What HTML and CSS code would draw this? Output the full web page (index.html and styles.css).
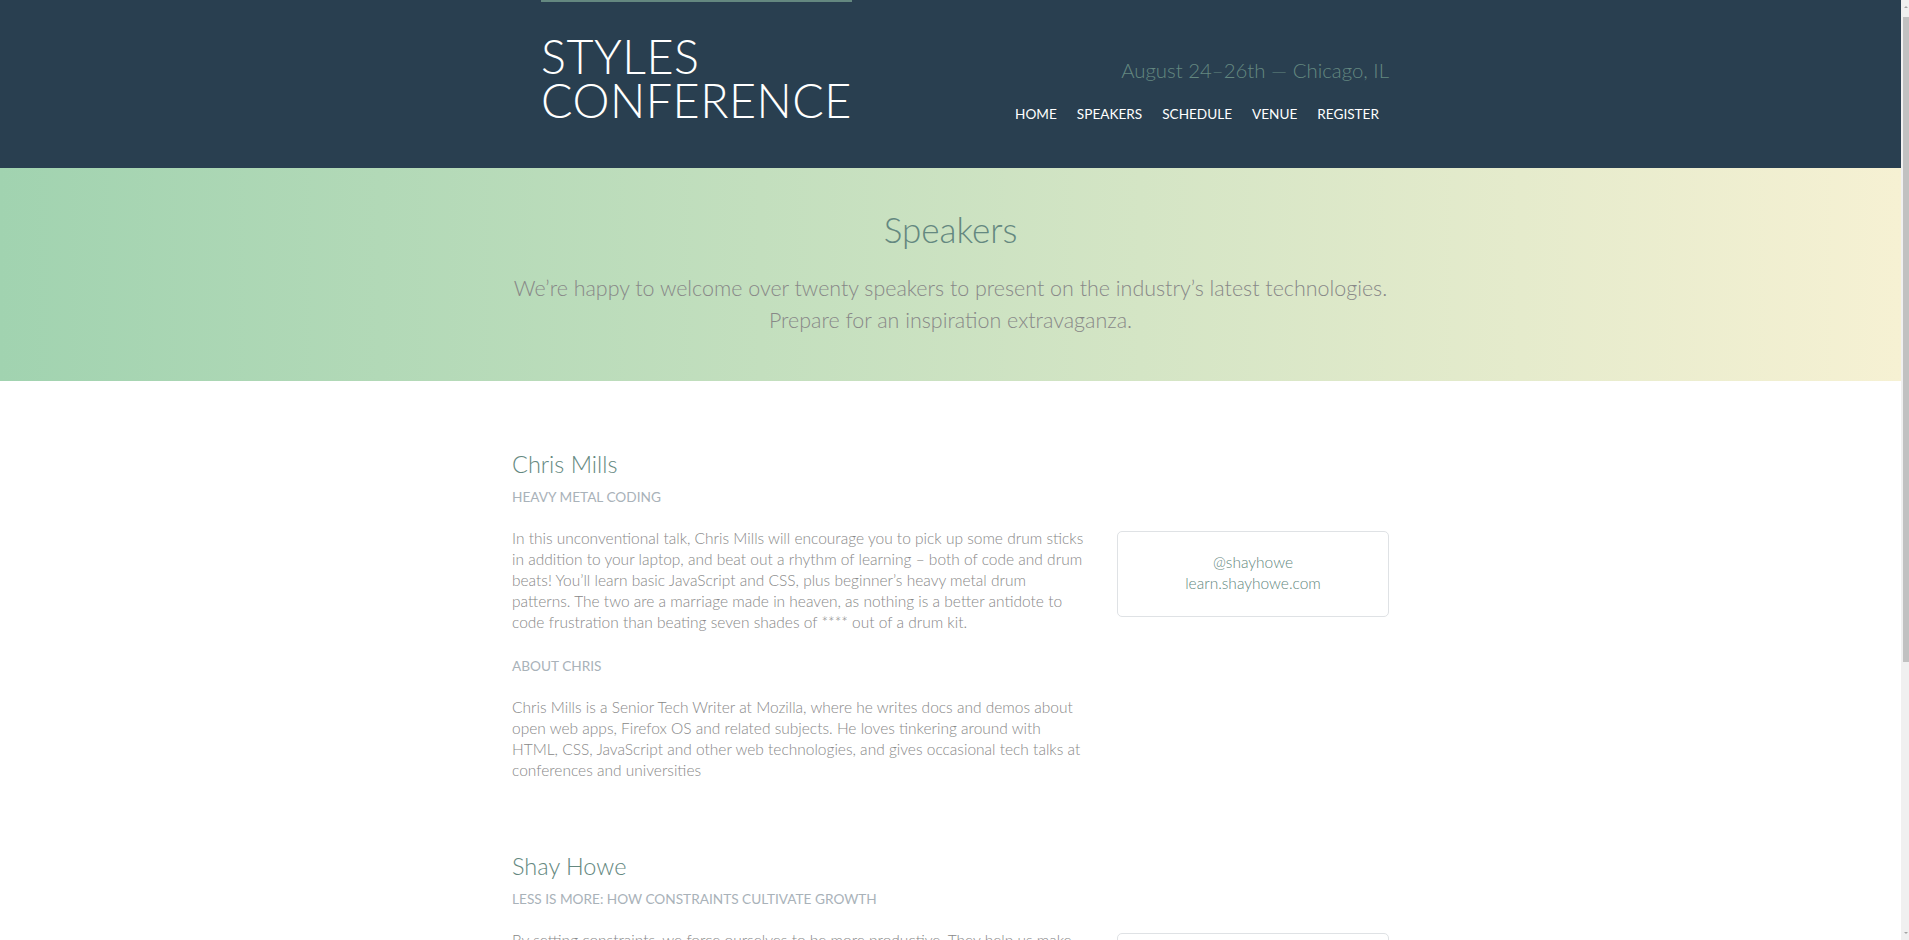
FILE: index.html
```html
<!DOCTYPE html>
<html lang="en">
<head>
<meta charset="utf-8">
<title>Speakers — Styles Conference</title>
<link rel="stylesheet" href="styles.css">
</head>
<body>
<header class="site-header">
  <div class="container header-inner">
    <h1 class="logo"><a href="#">Styles<br>Conference</a></h1>
    <div class="header-right">
      <h3 class="tagline">August 24–26th — Chicago, IL</h3>
      <nav class="nav">
        <a href="#">Home</a>
        <a href="#">Speakers</a>
        <a href="#">Schedule</a>
        <a href="#">Venue</a>
        <a href="#">Register</a>
      </nav>
    </div>
  </div>
</header>

<section class="lead">
  <div class="container">
    <h1 class="lead-title">Speakers</h1>
    <p class="lead-text">We’re happy to welcome over twenty speakers to present on the industry’s latest technologies. Prepare for an inspiration extravaganza.</p>
  </div>
</section>

<main class="container speakers">
  <section class="speaker">
    <div class="speaker-main">
      <h2 class="speaker-name">Chris Mills</h2>
      <h5 class="label">Heavy Metal Coding</h5>
      <p>In this unconventional talk, Chris Mills will encourage you to pick up some drum sticks in addition to your laptop, and beat out a rhythm of learning – both of code and drum beats! You’ll learn basic JavaScript and CSS, plus beginner’s heavy metal drum patterns. The two are a marriage made in heaven, as nothing is a better antidote to code frustration than beating seven shades of **** out of a drum kit.</p>
      <h5 class="label">About Chris</h5>
      <p>Chris Mills is a Senior Tech Writer at Mozilla, where he writes docs and demos about open web apps, Firefox OS and related subjects. He loves tinkering around with HTML, CSS, JavaScript and other web technologies, and gives occasional tech talks at conferences and universities</p>
    </div>
    <aside class="speaker-aside">
      <div class="speaker-info">
        <a href="#">@shayhowe</a>
        <a href="#">learn.shayhowe.com</a>
      </div>
    </aside>
  </section>

  <section class="speaker">
    <div class="speaker-main">
      <h2 class="speaker-name">Shay Howe</h2>
      <h5 class="label">Less Is More: How Constraints Cultivate Growth</h5>
      <p>By setting constraints, we force ourselves to be more productive. They help us make decisions, keep us focused, and push us to find creative solutions. Learn how embracing limits on time, tools and scope leads to better work and faster growth.</p>
      <h5 class="label">About Shay</h5>
      <p>Shay Howe is a designer and front-end developer who loves building products and teaching others to do the same.</p>
    </div>
    <aside class="speaker-aside">
      <div class="speaker-info">
        <a href="#">@shayhowe</a>
        <a href="#">learn.shayhowe.com</a>
      </div>
    </aside>
  </section>
</main>

<footer class="site-footer">
  <div class="container footer-inner">
    <small>&copy; Styles Conference</small>
  </div>
</footer>

<div class="scrollbar" aria-hidden="true">
  <span class="scroll-arrow scroll-arrow-up"></span>
  <span class="scroll-thumb"></span>
  <span class="scroll-arrow scroll-arrow-down"></span>
</div>
</body>
</html>
```

FILE: styles.css
```css
body {
  margin: 0 8px 0 0;
  color: #888;
  font: 300 15.5px/21px "Lato", "Open Sans", "Liberation Sans", sans-serif;
  background: #fff;
}

a {
  color: #648880;
  text-decoration: none;
}

.container {
  width: 877px;
  margin: 0 auto;
}

/* Header */
.site-header {
  background: #293f50;
  color: #a9b2b9;
}

.header-inner {
  display: flex;
  justify-content: space-between;
  align-items: flex-start;
}

.logo {
  margin: 0 0 0 29px;
  padding: 32px 0 46px;
  border-top: 2px solid #648880;
  font-size: 46.7px;
  font-weight: 300;
  line-height: 44px;
  letter-spacing: 0.5px;
  text-transform: uppercase;
}

.logo a {
  color: #fff;
}

.header-right {
  display: flex;
  flex-direction: column;
  align-items: flex-end;
}

.tagline {
  margin: 54px 0 0;
  color: #648880;
  font-size: 20.4px;
  font-weight: 300;
  line-height: 33px;
}

.nav {
  display: flex;
  gap: 20px;
  margin: 16px 10px 0 0;
  font-size: 13.6px;
  font-weight: 400;
  line-height: 22px;
  text-transform: uppercase;
}

.nav a {
  color: #fff;
}

/* Lead */
.lead {
  background: linear-gradient(to right, #a1d3b0, #f6f1d3);
  text-align: center;
  padding: 39px 0 45px;
}

.lead-title {
  margin: 0 0 21px;
  color: #648880;
  font-size: 35px;
  font-weight: 300;
  line-height: 44px;
}

.lead-text {
  margin: 0;
  font-size: 21.45px;
  line-height: 32px;
}

/* Speakers */
.speakers {
  padding-top: 61px;
}

.speaker {
  display: grid;
  grid-template-columns: 575px 272px;
  column-gap: 30px;
  margin-bottom: 41px;
}

.speaker-name {
  margin: 0;
  color: #648880;
  font-size: 23.5px;
  font-weight: 300;
  line-height: 44px;
}

.label {
  margin: 0 0 20px;
  color: #a9b2b9;
  font-size: 13.65px;
  font-weight: 400;
  line-height: 22px;
  text-transform: uppercase;
}

.speaker-main p {
  margin: 0 0 22px;
}

.speaker-info {
  margin-top: 89px;
  padding: 20px 0 22px;
  border: 1px solid #dfe2e5;
  border-radius: 5px;
  display: flex;
  flex-direction: column;
  align-items: center;
}

/* Footer */
.site-footer {
  background: #293f50;
  color: #a9b2b9;
  padding: 22px 0;
}

.footer-inner small {
  font-size: 14px;
}

/* Window scrollbar (drawn over the right edge) */
.scrollbar {
  position: fixed;
  top: 0;
  right: 0;
  width: 8px;
  height: 100vh;
  background: #f0f0f0;
}

.scroll-thumb {
  position: absolute;
  top: 17px;
  left: 2px;
  width: 6px;
  height: 645px;
  background: #c1c1c1;
}

.scroll-arrow {
  position: absolute;
  left: 3px;
  width: 0;
  height: 0;
  border-left: 2px solid transparent;
  border-right: 2px solid transparent;
}

.scroll-arrow-up {
  top: 6px;
  border-bottom: 2px solid #a3a3a3;
}

.scroll-arrow-down {
  bottom: 6px;
  border-top: 2px solid #a3a3a3;
}
```
